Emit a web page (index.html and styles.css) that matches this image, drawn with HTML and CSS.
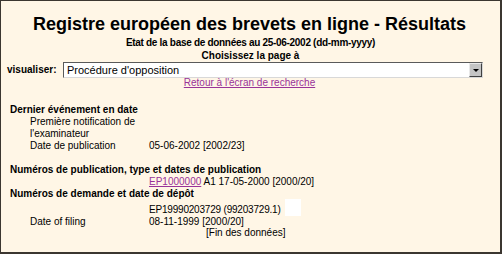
FILE: index.html
```html
<!DOCTYPE html>
<html>
<head>
  <title>Registre européen des brevets en ligne - Résultats</title>
  <link rel="stylesheet" href="styles.css">
</head>
<body>
  <div class="page">
    <h1 class="title">Registre européen des brevets en ligne - Résultats</h1>
    <p class="state">Etat de la base de données au 25-06-2002 (dd-mm-yyyy)</p>
    <p class="choose">Choisissez la page à</p>
    <div class="pick">
      <span class="pick-label">visualiser:</span>
      <div class="select">
        <span class="select-text">Procédure d'opposition</span>
        <span class="select-btn"><span class="arrow"></span></span>
      </div>
    </div>
    <p class="back"><a href="#">Retour à l'écran de recherche</a></p>

    <div class="data">
      <div class="head">Dernier événement en date</div>
      <div class="row">
        <span class="key">Première notification de l'examinateur</span>
        <span class="val"></span>
      </div>
      <div class="row">
        <span class="key">Date de publication</span>
        <span class="val">05-06-2002 [2002/23]</span>
      </div>

      <div class="head gap">Numéros de publication, type et dates de publication</div>
      <div class="row">
        <span class="key"></span>
        <span class="val"><a href="#">EP1000000</a> A1 17-05-2000 [2000/20]</span>
      </div>
      <div class="head">Numéros de demande et date de dépôt</div>
      <div class="row tall">
        <span class="key"></span>
        <span class="val narrow">EP19990203729 (99203729.1) <span class="blank"></span></span>
      </div>
      <div class="row last">
        <span class="key">Date of filing</span>
        <span class="val">08-11-1999 [2000/20]</span>
      </div>
      <div class="end">[Fin des données]</div>
    </div>
  </div>
</body>
</html>
```

FILE: styles.css
```css
html, body {
  height: 100%;
}

body {
  margin: 0;
  font-family: "Liberation Sans", Arial, sans-serif;
  font-size: 10px;
  color: #000;
}

.page {
  height: 100%;
  box-sizing: border-box;
  background: #fff6e6;
  border-style: solid;
  border-color: #3b3630;
  border-width: 1px 2px 2px 1px;
}

a {
  color: #993399;
}

.title {
  margin: 0;
  padding: 12px 2px 0 0;
  font-size: 18px;
  line-height: 23px;
  text-align: center;
}

.state, .choose {
  margin: 0;
  font-weight: bold;
  text-align: center;
  line-height: 13px;
}

.state {
  letter-spacing: -0.3px;
}

.pick {
  display: flex;
  align-items: center;
  padding-left: 6px;
}

.pick-label {
  width: 56px;
  font-weight: bold;
  line-height: 12px;
}

.select {
  display: flex;
  width: 420px;
  height: 16px;
  box-sizing: border-box;
  background: #fff;
  border-style: solid;
  border-width: 1px;
  border-color: #5a5a5a #d8d8d8 #d8d8d8 #5a5a5a;
  font-size: 11px;
}

.select-text {
  flex: 1;
  padding-left: 3px;
  line-height: 14px;
}

.select-btn {
  display: flex;
  align-items: center;
  justify-content: center;
  width: 11px;
  background: #c4c4c4;
  border-top: 1px solid #e8e8e8;
  border-left: 1px solid #e8e8e8;
  border-right: 1px solid #404040;
  border-bottom: 1px solid #404040;
}

.arrow {
  width: 0;
  height: 0;
  border-left: 3px solid transparent;
  border-right: 3px solid transparent;
  border-top: 3px solid #000;
}

.back {
  margin: -1px 0 0;
  padding-right: 2px;
  text-align: center;
  line-height: 12px;
}

.data {
  padding: 15px 0 0 9px;
  line-height: 12px;
}

.head {
  font-weight: bold;
}

.head.gap {
  margin-top: 12px;
}

.row {
  display: flex;
}

.key {
  width: 139px;
  padding: 0 10px 0 20px;
  box-sizing: border-box;
}

.tall {
  padding-top: 4px;
}

.narrow {
  letter-spacing: -0.2px;
}

.blank {
  display: inline-block;
  width: 16px;
  height: 17px;
  margin: -5px 0 0 2px;
  background: #fff;
  vertical-align: top;
}

.last, .end {
  line-height: 11px;
}

.end {
  padding-left: 196px;
}
```
